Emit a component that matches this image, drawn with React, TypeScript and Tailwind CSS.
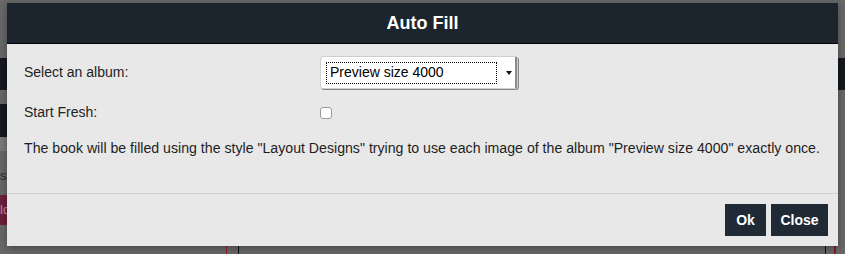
import React from 'react';

const AutoFillDialog = () => {
  return (
    <div className="relative h-[254px] w-[845px] overflow-hidden bg-[#686868] font-['Liberation_Sans',Arial,sans-serif]">
      {/* dimmed page behind the dialog */}
      <div className="absolute left-0 top-[58px] h-[32px] w-full bg-[#16191d]" />
      <div className="absolute left-0 top-[104px] h-[33px] w-[20px] bg-[#16191d]" />
      <div className="absolute left-0 top-[137px] h-[14px] w-[20px] bg-[#7a7a7a]" />
      <div className="absolute left-0 top-[166px] text-[13px] text-[#2a2a2a]">s</div>
      <div className="absolute left-0 top-[195px] h-[30px] w-[20px] bg-[#6d1f3c] text-[13px] leading-[30px] text-[#b58c9b]">ld</div>
      <div className="absolute left-[226px] top-[240px] h-[20px] w-[1px] bg-[#9b1b1b]" />
      <div className="absolute left-[238px] top-[240px] h-[20px] w-[1px] bg-[#111]" />
      <div className="absolute left-[825px] top-[240px] h-[20px] w-[1px] bg-[#111]" />
      <div className="absolute left-[834px] top-[240px] h-[20px] w-[2px] bg-[#8a1b1b]" />

      {/* Dialog */}
      <div className="relative ml-[7px] mt-[3px] w-[831px] bg-[#e8e8e8] shadow-[0_2px_8px_rgba(0,0,0,0.35)]">
        <div className="flex h-[41px] items-center justify-center border-b border-black bg-[#1c252e]">
          <h1 className="text-[18px] font-bold text-white">Auto Fill</h1>
        </div>

        <div className="px-[17px] pt-[12px]">
          <div className="grid grid-cols-[296px_1fr] items-center gap-y-[13px] text-[14px] text-[#222]">
            <label>Select an album:</label>
            <div className="flex h-[33px] w-[198px] items-center rounded-[3px] border border-[#cfcfcf] bg-white shadow-[1px_1px_0_#8a8a8a]">
              <div className="ml-[5px] flex h-[22px] w-[171px] items-center border border-dotted border-black pl-[3px] text-[14px] text-black">
                Preview size 4000
              </div>
              <div className="ml-auto flex h-full w-[14px] items-center justify-center border-r-2 border-[#8c8c8c]">
                <svg width="6" height="4" viewBox="0 0 6 4">
                  <path d="M0 0h6L3 4z" fill="#111" />
                </svg>
              </div>
            </div>
            <label>Start Fresh:</label>
            <div className="flex h-[15px] items-center">
              <span className="h-[12px] w-[12px] rounded-[3px] border border-[#9a9a9a] bg-white" />
            </div>
          </div>
          <p className="pb-[34px] pt-[15px] text-[14.15px] text-[#1e1e1e]">
            The book will be filled using the style "Layout Designs" trying to use each image of the album "Preview size 4000" exactly once.
          </p>
        </div>

        <div className="flex justify-end gap-[5px] border-t border-[#d0d0d0] px-[10px] pb-[10px] pt-[10px]">
          <button className="h-[32px] w-[41px] bg-[#1f2a35] text-[14px] font-bold text-white">Ok</button>
          <button className="h-[32px] w-[57px] bg-[#1f2a35] text-[14px] font-bold text-white">Close</button>
        </div>
      </div>
    </div>
  );
};

export default function App() {
  return <AutoFillDialog />;
}
